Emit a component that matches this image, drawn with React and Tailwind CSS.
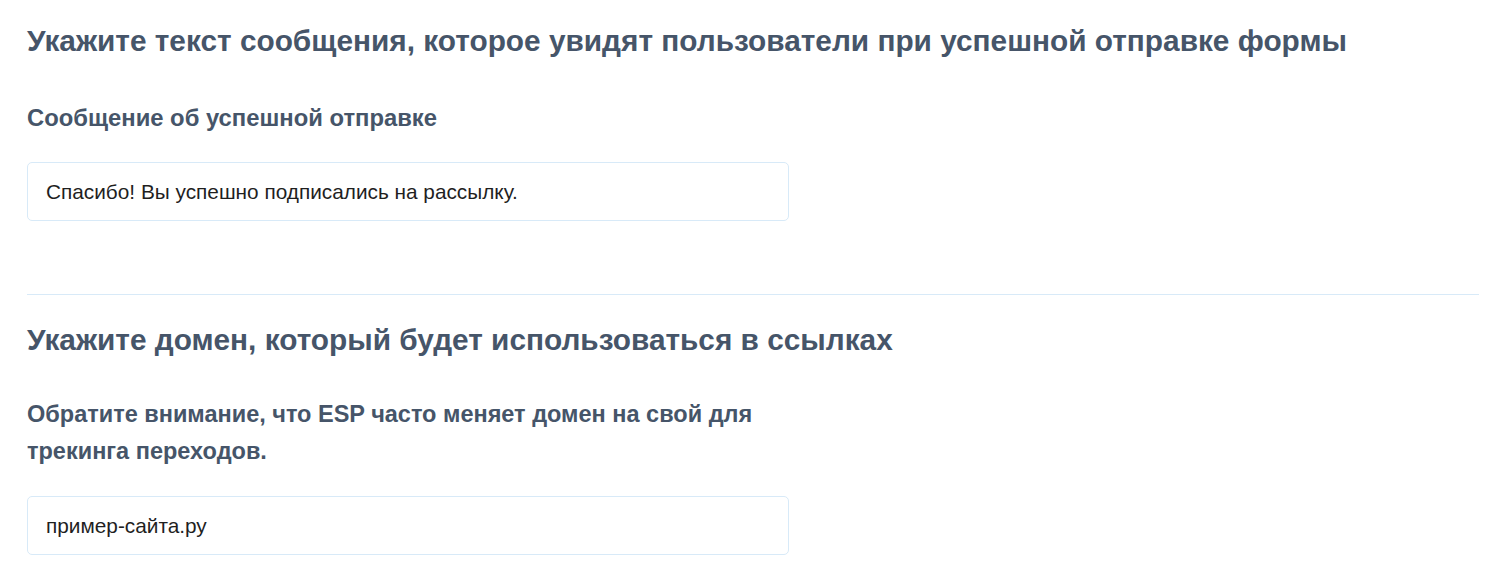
const HEADING = 'text-[29.8px] leading-[36px] font-bold text-[#465569]'
const LABEL = 'text-[23.8px] font-bold text-[#465569]'

function Field({ value }) {
  return (
    <div className="w-[762px] h-[59px] flex items-center px-[18px] border border-[#d8eaf8] rounded-[5px] bg-white">
      <span className="text-[20.8px] text-[#1f1f1f]">{value}</span>
    </div>
  )
}

export default function App() {
  return (
    <div className="min-h-screen bg-white pl-[27px] pr-[15px] pt-[23px] font-['Liberation_Sans',Arial,sans-serif]">
      {/* Success message */}
      <h1 className={HEADING}>
        Укажите текст сообщения, которое увидят пользователи при успешной отправке формы
      </h1>
      <p className={`${LABEL} leading-[30px] mt-[44px]`}>Сообщение об успешной отправке</p>
      <div className="mt-[29px]">
        <Field value="Спасибо! Вы успешно подписались на рассылку." />
      </div>

      <div className="h-px bg-[#d8eaf8] mt-[73px]" />

      {/* Domain */}
      <h2 className={`${HEADING} mt-[27px]`}>Укажите домен, который будет использоваться в ссылках</h2>
      <p className={`text-[23.5px] font-bold text-[#465569] leading-[37px] mt-[38px] max-w-[762px]`}>
        Обратите внимание, что ESP часто меняет домен на свой для трекинга переходов.
      </p>
      <div className="mt-[26px]">
        <Field value="пример-сайта.ру" />
      </div>
    </div>
  )
}
